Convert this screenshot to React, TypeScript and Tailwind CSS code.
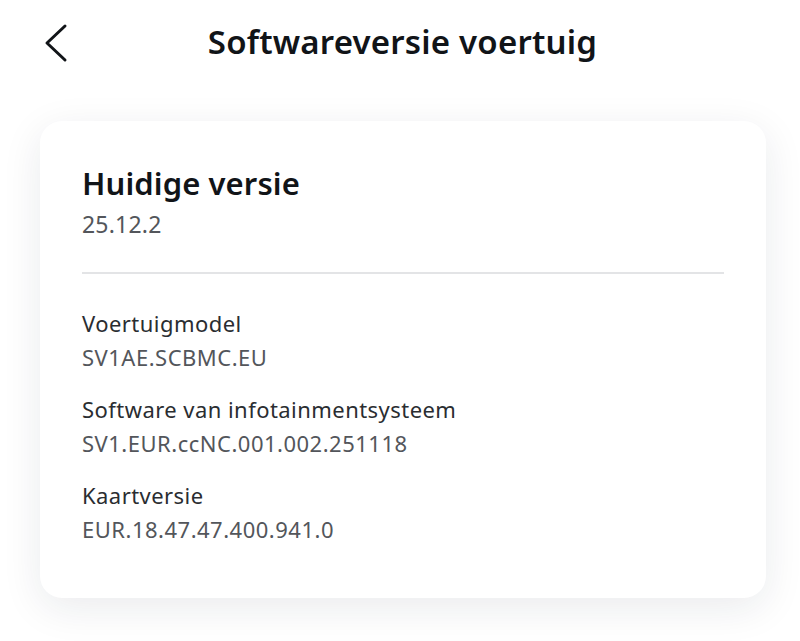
import React from "react";

function Item({ label, value }: { label: string; value: string }) {
  return (
    <div className="flex flex-col">
      <div className="text-[22px] leading-[34px] tracking-[0.45px] text-[#2a2d31]">{label}</div>
      <div className="text-[22px] leading-[34px] tracking-[0.5px] text-[#53565b]">{value}</div>
    </div>
  );
}

export default function App() {
  return (
    <div
      className="w-[800px] h-[641px] bg-white overflow-hidden"
      style={{ fontFamily: '"Noto Sans", "Open Sans", sans-serif' }}
    >
      <div className="relative h-[86px] flex items-center justify-center">
        <svg
          className="absolute left-[40px] top-[20px]"
          width="34"
          height="46"
          viewBox="0 0 34 46"
          fill="none"
        >
          <path
            d="M25 6 L7 23 L25 40"
            stroke="#111418"
            strokeWidth="3"
            strokeLinecap="round"
            strokeLinejoin="round"
          />
        </svg>
        <h1 className="text-[33px] font-semibold text-[#111418] tracking-[0.2px] mt-[-2px] ml-[5px]">
          Softwareversie voertuig
        </h1>
      </div>
      <div className="px-[40px] pt-[35px]">
        <div className="bg-white rounded-[22px] shadow-[0_10px_40px_rgba(20,30,60,0.09)] w-[726px] h-[477px] px-[42px] pt-[43px]">
          <div className="text-[31px] leading-[38px] font-semibold tracking-[0.1px] text-[#111418]">
            Huidige versie
          </div>
          <div className="text-[23px] leading-[33px] tracking-[0.2px] text-[#53565b] mt-[6px]">25.12.2</div>
          <div className="h-[2px] bg-[#e3e4e6] mt-[31px] mb-[32px]" />
          <div className="flex flex-col gap-[18px]">
            <Item label="Voertuigmodel" value="SV1AE.SCBMC.EU" />
            <Item label="Software van infotainmentsysteem" value="SV1.EUR.ccNC.001.002.251118" />
            <Item label="Kaartversie" value="EUR.18.47.47.400.941.0" />
          </div>
        </div>
      </div>
    </div>
  );
}
